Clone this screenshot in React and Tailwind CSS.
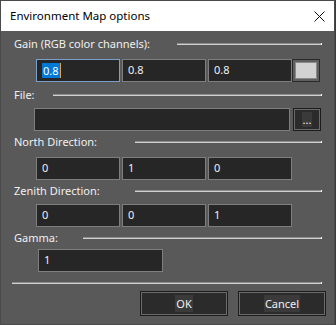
const font = { fontFamily: '"Noto Sans", "Open Sans", sans-serif' };

function Rule() {
  return (
    <div className="flex-1 flex items-center">
      <div className="flex-1 h-[2px] border-t border-t-[#8c8c8c] bg-[#d0d0d0]" />
      <div className="w-[1px] h-[2px] bg-white" />
    </div>
  );
}

function Label({ text, width }) {
  return (
    <div className="flex items-center h-4 pl-[13px] pr-[12px]">
      <div className="text-[11px] text-[#f0f0f0] leading-4 shrink-0" style={{ width }}>{text}</div>
      <Rule />
    </div>
  );
}

function Field({ value, w = 'w-[84px]', focused }) {
  return (
    <div
      className={`${w} h-[23px] bg-[#262626] border flex items-center pl-[5px] text-[11px] text-[#f0f0f0] ${
        focused ? 'border-[#7ca0cc]' : 'border-[#7e7e7e]'
      }`}
    >
      {focused ? (
        <span className="flex items-center">
          <span className="bg-[#0078d7] text-white px-[1px] leading-[15px]">{value}</span>
          <span className="w-[1px] h-[15px] bg-[#e0a050]" />
        </span>
      ) : (
        value
      )}
    </div>
  );
}

function DlgButton({ children, w }) {
  return (
    <div className={`${w} h-[25px] border border-[#1c1c1c] bg-[#6a6a6a] p-[1px]`}>
      <div className="w-full h-full bg-[#2b2b2b] flex items-center justify-center text-[11px] text-[#f0f0f0]">
        <span className="bg-[#3a3a3a] px-[1px] leading-[17px]">{children}</span>
      </div>
    </div>
  );
}

export default function App() {
  return (
    <div className="w-[336px] h-[325px] bg-[#3c3c3c] overflow-hidden" style={font}>
      <div className="w-[335px] h-[325px] border border-[#4a4a4a] bg-[#595959] flex flex-col">
        {/* Title bar */}
        <div className="h-[30px] bg-white flex items-center justify-between pl-[9px] pr-[9px] shrink-0">
          <span className="text-[11.5px] text-black">Environment Map options</span>
          <svg width="11" height="11" viewBox="0 0 11 11" className="mt-[1px]">
            <path d="M0.5 0.5 L10.5 10.5 M10.5 0.5 L0.5 10.5" stroke="#111" strokeWidth="1" />
          </svg>
        </div>

        <div className="flex flex-col pt-[5px]">
          <Label text="Gain (RGB color channels):" width={163} />
          <div className="flex mt-[7px] pl-[35px]">
            <Field value="0.8" focused />
            <div className="w-[2px]" />
            <Field value="0.8" />
            <div className="w-[2px]" />
            <Field value="0.8" />
            <div className="w-[28px] h-[23px] border border-[#2a2a2a] bg-[#5e5e5e] p-[2px]">
              <div className="w-full h-full border border-[#8a8a8a] bg-[#d2d2d2]" />
            </div>
          </div>

          <div className="mt-[5px]">
            <Label text="File:" width={39} />
          </div>
          <div className="flex mt-[5px] pl-[33px]">
            <div className="w-[256px] h-[23px] bg-[#262626] border border-[#7e7e7e]" />
            <div className="w-[3px]" />
            <div className="w-[28px] h-[23px] border border-[#1c1c1c] bg-[#6a6a6a] p-[1px]">
              <div className="w-full h-full bg-[#2b2b2b] flex items-center justify-center">
                <span className="bg-[#3a3a3a] text-[#f0f0f0] text-[11px] leading-[15px] px-[1px]">...</span>
              </div>
            </div>
          </div>

          <div className="mt-[3px]">
            <Label text="North Direction:" width={121} />
          </div>
          <div className="flex gap-[2px] mt-[7px] pl-[35px]">
            <Field value="0" />
            <Field value="1" />
            <Field value="0" />
          </div>

          <div className="mt-[3px]">
            <Label text="Zenith Direction:" width={121} />
          </div>
          <div className="flex gap-[2px] mt-[5px] pl-[35px]">
            <Field value="0" />
            <Field value="0" />
            <Field value="1" />
          </div>

          <div className="mt-[3px]">
            <Label text="Gamma:" width={69} />
          </div>
          <div className="flex mt-[3px] pl-[37px]">
            <Field value="1" w="w-[125px]" />
          </div>

          <div className="flex mt-[10px] pl-[11px] pr-[12px]">
            <Rule />
          </div>

          <div className="flex justify-end gap-[10px] mt-[7px] pr-[8px]">
            <DlgButton w="w-[88px]">OK</DlgButton>
            <DlgButton w="w-[88px]">Cancel</DlgButton>
          </div>
        </div>
      </div>
    </div>
  );
}
